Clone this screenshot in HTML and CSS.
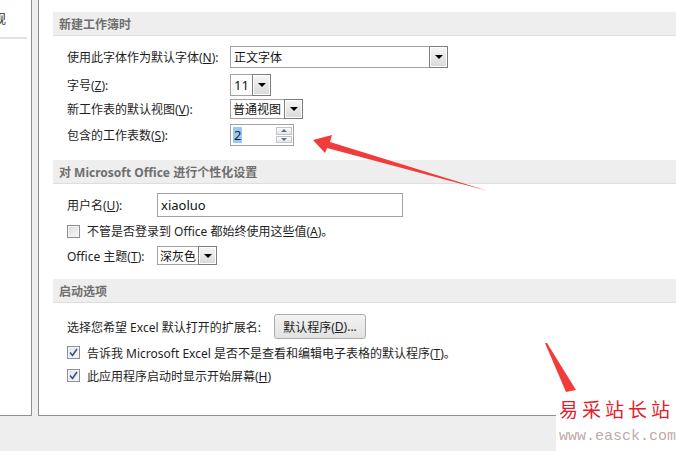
FILE: index.html
```html
<!DOCTYPE html>
<html lang="zh-CN">
<head>
    <meta charset="UTF-8">
    <title>Excel 选项</title>
    <link rel="stylesheet" href="styles.css">
</head>
<body>
    <div class="dialog">
        <div class="nav">
            <div class="nav-item"><span class="nav-text">常规</span></div>
        </div>
        <div class="main">
            <div class="sec-head">新建工作簿时</div>
            <div class="row r1">
                <div class="lbl w1">使用此字体作为默认字体(<u>N</u>):</div>
                <div class="combo c-font"><span class="val">正文字体</span><span class="drop"></span></div>
            </div>
            <div class="row r2">
                <div class="lbl w1">字号(<u>Z</u>):</div>
                <div class="combo c-size"><span class="val">11</span><span class="drop"></span></div>
            </div>
            <div class="row r3">
                <div class="lbl w1">新工作表的默认视图(<u>V</u>):</div>
                <div class="combo c-view"><span class="val">普通视图</span><span class="drop"></span></div>
            </div>
            <div class="row r4">
                <div class="lbl w1">包含的工作表数(<u>S</u>):</div>
                <div class="spin">
                    <span class="val"><span class="sel">2</span></span>
                    <span class="arrows">
                        <span class="sbtn up"></span>
                        <span class="sbtn down"></span>
                    </span>
                </div>
            </div>

            <div class="sec-head s2">对 Microsoft Office 进行个性化设置</div>
            <div class="row r5">
                <div class="lbl w2">用户名(<u>U</u>):</div>
                <div class="textbox">xiaoluo</div>
            </div>
            <div class="row r6">
                <span class="check"></span>
                <span class="lbl">不管是否登录到 Office 都始终使用这些值(<u>A</u>)。</span>
            </div>
            <div class="row r7">
                <div class="lbl w2">Office 主题(<u>T</u>):</div>
                <div class="combo c-theme"><span class="val">深灰色</span><span class="drop"></span></div>
            </div>

            <div class="sec-head s3">启动选项</div>
            <div class="row r8">
                <div class="lbl w3">选择您希望 Excel 默认打开的扩展名:</div>
                <div class="button">默认程序(<u>D</u>)...</div>
            </div>
            <div class="row r9">
                <span class="check on">
                    <svg width="9" height="9" viewBox="0 0 9 9"><path d="M1 4.5 L3.5 7.5 L8 1" fill="none" stroke="#3d4f84" stroke-width="1.6"/></svg>
                </span>
                <span class="lbl">告诉我 Microsoft Excel 是否不是查看和编辑电子表格的默认程序(<u>T</u>)。</span>
            </div>
            <div class="row r10">
                <span class="check on">
                    <svg width="9" height="9" viewBox="0 0 9 9"><path d="M1 4.5 L3.5 7.5 L8 1" fill="none" stroke="#3d4f84" stroke-width="1.6"/></svg>
                </span>
                <span class="lbl">此应用程序启动时显示开始屏幕(<u>H</u>)</span>
            </div>
        </div>
    </div>

    <!-- 标注箭头 -->
    <svg class="marks" width="676" height="451" viewBox="0 0 676 451">
        <polygon points="313,140 332,135 330,142 488,191 327,148 325,153" fill="#f23b3b"/>
        <polygon points="545,343 547,343 576,390 566,392" fill="#f23b3b"/>
    </svg>

    <div class="watermark">
        <div class="wm-cn">易采站长站</div>
        <div class="wm-en">www.easck.com</div>
    </div>
</body>
</html>
```

FILE: styles.css
```css
*{
    box-sizing: border-box;
}
body{
    margin: 0;
    width: 676px;
    height: 451px;
    overflow: hidden;
    background-color: #eeeeee;
    font-family: "Noto Sans", "Noto Sans CJK SC", sans-serif;
    font-size: 12px;
    color: #1e1e1e;
    position: relative;
}
u{
    text-decoration: underline;
    text-underline-offset: 1px;
}
.dialog{
    display: flex;
    gap: 6px;
    height: 416px;
}
.nav{
    width: 32px;
    background: #fff;
    border-right: 1px solid #8b8f96;
    border-bottom: 1px solid #8b8f96;
}
.nav-item{
    width: 27px;
    height: 39px;
    border-bottom: 2px solid #e2e2e2;
    display: flex;
    align-items: center;
    padding-bottom: 2px;
}
.nav-text{
    width: 6px;
    overflow: hidden;
    display: flex;
    justify-content: flex-end;
    white-space: nowrap;
    font-size: 13px;
    color: #333;
}
.main{
    flex: 1;
    margin-right: -10px;
    background: #fff;
    border-left: 1px solid #8b8f96;
    border-bottom: 1px solid #8b8f96;
    padding: 12px 0 0 14px;
}
.sec-head{
    height: 24px;
    background: #eeeeee;
    border-bottom: 1px solid #dedede;
    padding-left: 6px;
    display: flex;
    align-items: center;
    font-weight: bold;
    color: #6e6e6e;
    font-size: 12px;
}
.sec-head.s2{ margin-top: 14px; }
.sec-head.s3{ margin-top: 14px; }

.row{
    display: flex;
    align-items: center;
    padding-left: 14px;
}
.r1{ height: 22px; margin-top: 10px; }
.r2{ height: 22px; margin-top: 6px; }
.r3{ height: 20px; margin-top: 3px; }
.r4{ height: 22px; margin-top: 5px; }
.r5{ height: 24px; margin-top: 9px; }
.r6{ height: 14px; margin-top: 7px; }
.r7{ height: 19px; margin-top: 8px; }
.r8{ height: 25px; margin-top: 11px; }
.r9{ height: 15px; margin-top: 6px; }
.r10{ height: 15px; margin-top: 8px; }

.lbl{
    white-space: nowrap;
}
.w1{ width: 163px; }
.w2{ width: 90px; }
.w3{ width: 207px; }

.combo{
    height: 100%;
    display: flex;
    border: 1px solid #a3a3a3;
    background: #fff;
}
.combo .val{
    flex: 1;
    display: flex;
    align-items: center;
    padding-left: 3px;
    font-size: 12px;
    color: #111;
    white-space: nowrap;
    overflow: hidden;
}
.combo .drop{
    width: 19px;
    flex-shrink: 0;
    margin: -1px -1px -1px 0;
    border: 1px solid #7c7c7c;
    box-shadow: inset 0 0 0 1px #fff;
    background: linear-gradient(#f6f6f6, #d9d9d9);
    display: flex;
    justify-content: center;
    align-items: center;
}
.combo .drop::after{
    content: "";
    border-left: 4px solid transparent;
    border-right: 4px solid transparent;
    border-top: 4px solid #000;
}
.c-font{ width: 218px; }
.c-size{ width: 41px; }
.c-size .val{ font-size: 13px; }
.c-view{ width: 73px; }
.c-view .val{ padding-left: 2px; }
.c-theme{ width: 60px; }
.c-theme .val{ padding-left: 2px; }

.spin{
    width: 64px;
    height: 100%;
    border: 1px solid #a3a3a3;
    background: #fff;
    display: flex;
}
.spin .val{
    flex: 1;
    display: flex;
    align-items: center;
    padding-left: 2px;
    font-size: 13px;
}
.spin .sel{
    background: #99c9f5;
    padding: 0 1px;
    line-height: 16px;
}
.spin .arrows{
    width: 17px;
    padding: 2px 1px 2px 0;
    display: flex;
    flex-direction: column;
    gap: 1px;
}
.sbtn{
    flex: 1;
    border: 1px solid #c4c4c4;
    background: linear-gradient(#fbfbfb, #e6e6e6);
    display: flex;
    justify-content: center;
    align-items: center;
}
.sbtn.up::after{
    content: "";
    border-left: 3px solid transparent;
    border-right: 3px solid transparent;
    border-bottom: 3px solid #5d6f93;
}
.sbtn.down::after{
    content: "";
    border-left: 3px solid transparent;
    border-right: 3px solid transparent;
    border-top: 3px solid #5d6f93;
}

.textbox{
    width: 246px;
    height: 100%;
    border: 1px solid #a3a3a3;
    padding-left: 3px;
    display: flex;
    align-items: center;
    font-size: 13px;
    color: #111;
}

.check{
    width: 13px;
    height: 13px;
    margin-right: 7px;
    border: 1px solid #8e8f8f;
    background: linear-gradient(135deg, #dcdcdc, #f7f7f7);
    box-shadow: inset 0 0 0 1px #f4f4f4;
    display: flex;
    justify-content: center;
    align-items: center;
}
.check.on{
    background: linear-gradient(135deg, #e2e4ea, #f7f7f9);
}

.button{
    width: 92px;
    height: 100%;
    border: 1px solid #adadad;
    border-radius: 3px;
    background: linear-gradient(#f3f3f3, #e2e2e2);
    display: flex;
    justify-content: center;
    align-items: center;
    white-space: nowrap;
}

.marks{
    position: absolute;
    left: 0;
    top: 0;
    pointer-events: none;
}
.watermark{
    position: absolute;
    left: 556px;
    top: 392px;
    width: 120px;
    height: 59px;
    background: #fff;
    padding: 5px 0 0 3px;
}
.wm-cn{
    font-family: "Noto Sans CJK SC", sans-serif;
    font-size: 19px;
    letter-spacing: 4px;
    line-height: 24px;
    color: #e3202a;
    white-space: nowrap;
}
.wm-en{
    margin-top: 10px;
    font-family: "Liberation Mono", monospace;
    font-size: 15px;
    line-height: 12px;
    color: #c1a9aa;
    white-space: nowrap;
}
```
